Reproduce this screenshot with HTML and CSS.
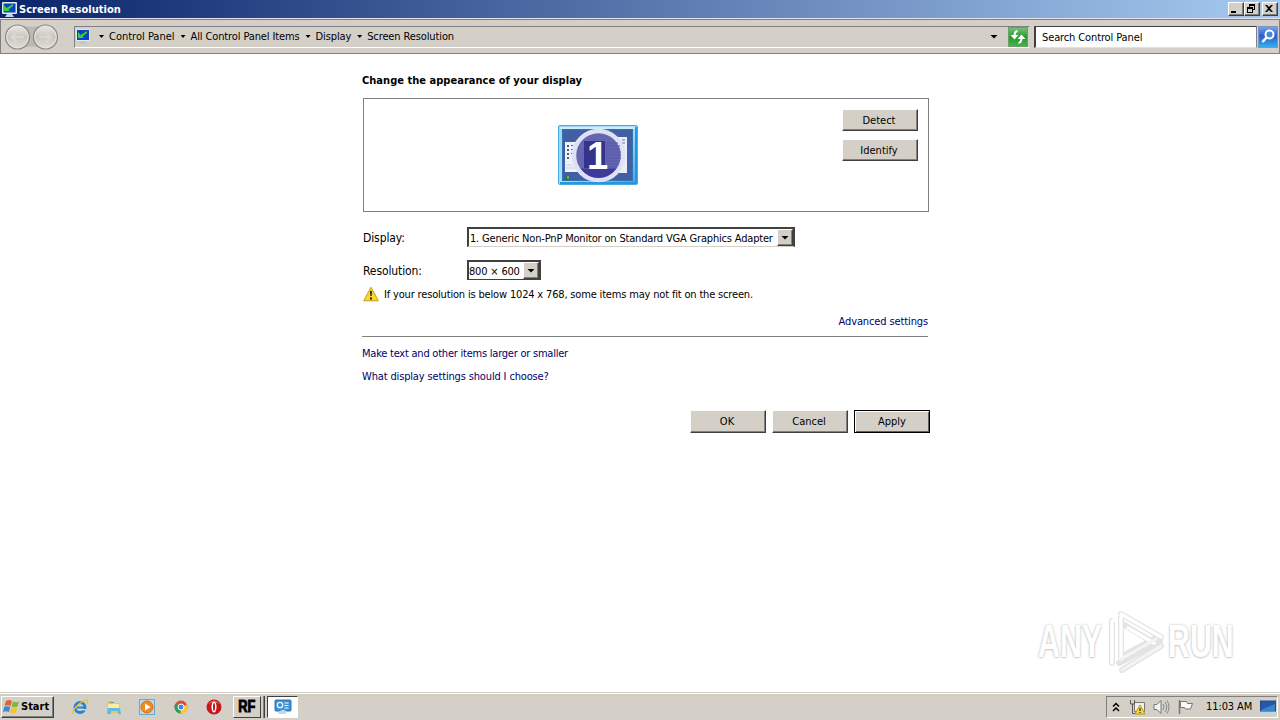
FILE: index.html
```html
<!DOCTYPE html>
<html lang="en">
<head>
    <meta charset="UTF-8">
    <meta name="viewport" content="width=device-width, initial-scale=1.0">
    <title>Screen Resolution</title>
    <link rel="stylesheet" href="styles.css">
</head>
<body>

    <!-- Title bar -->
    <header class="titlebar">
        <svg class="title-icon" viewBox="0 0 17 17">
            <rect x="1" y="1" width="15" height="12" rx="1" fill="#dfe9f2"/>
            <rect x="2.500" y="2.500" width="12" height="9" fill="#0b3fc4"/>
            <path d="M3 4v6h6L7.500 8.500L12 5V3L5.500 7z" fill="#35d43b"/>
            <path d="M6 13h5l2 3h-9z" fill="#c3d3e2"/>
        </svg>
        <h1>Screen Resolution</h1>
        <div class="window-buttons">
            <button><svg viewBox="0 0 12 10"><path d="M2 7h5v2h-5z"/></svg></button>
            <button><svg viewBox="0 0 12 10"><path d="M4 0h6v6h-2v-1h1v-3h-4v1h-1zM2 3h6v6h-6zM3 5v3h4v-3z" fill-rule="evenodd"/></svg></button>
            <button class="close"><svg viewBox="0 0 12 10"><path d="M2 1h2l2 2 2-2h2l-3 3.500 3 3.500h-2l-2-2-2 2h-2l3-3.500z"/></svg></button>
        </div>
    </header>

    <!-- Address bar -->
    <nav class="toolbar">
        <svg class="nav-buttons" viewBox="0 0 54 28">
            <defs>
                <linearGradient id="nav" x1="0" y1="0" x2="0" y2="1">
                    <stop offset="0" stop-color="#eceae7"/>
                    <stop offset=".5" stop-color="#c9c5be"/>
                    <stop offset="1" stop-color="#e2dfda"/>
                </linearGradient>
            </defs>
            <path d="M14 1.500Q27 6 41 1.500V26Q27 21 14 26z" fill="#bdb9b2"/>
            <circle cx="13.500" cy="14" r="12" fill="url(#nav)" stroke="#8d8a86" stroke-width="1.200"/>
            <circle cx="41.500" cy="14" r="12" fill="url(#nav)" stroke="#8d8a86" stroke-width="1.200"/>
            <circle cx="13.500" cy="14" r="10.700" fill="none" stroke="#e6e4e0"/>
            <circle cx="41.500" cy="14" r="10.700" fill="none" stroke="#e6e4e0"/>
            <path d="M20 14H8m5-5l-5 5 5 5M35 14h12m-5-5l5 5-5 5" fill="none" stroke="#d9d6d0" stroke-width="2.500"/>
        </svg>
        <div class="address">
            <svg class="address-icon" viewBox="0 0 16 16">
                <rect x="1" y="0" width="14" height="12" rx="1" fill="#dfe9f2"/>
                <rect x="2" y="1" width="12" height="10" fill="#0b3fc4"/>
                <path d="M3 3v6h6L7.500 7.500L12 4V2L5.500 6z" fill="#35d43b"/>
                <path d="M6 12h4l2 3h-8z" fill="#b9c6d4"/>
            </svg>
            <i class="arrow"></i><span>Control Panel</span>
            <i class="arrow"></i><span class="tight">All Control Panel Items</span>
            <i class="arrow"></i><span class="tight">Display</span>
            <i class="arrow"></i><span class="tight">Screen Resolution</span>
            <i class="arrow history"></i>
            <svg class="refresh" viewBox="0 0 20 20">
                <defs>
                    <linearGradient id="green" x1="0" y1="0" x2="0" y2="1">
                        <stop offset="0" stop-color="#7cc47a"/>
                        <stop offset=".5" stop-color="#249b2b"/>
                        <stop offset="1" stop-color="#42b843"/>
                    </linearGradient>
                </defs>
                <rect x=".5" y=".5" width="19" height="19" fill="url(#green)" stroke="#6f9d6d"/>
                <path d="M9.500 4Q6.500 4.500 6.500 9M10.500 16Q13.500 15.500 13.500 11" fill="none" stroke="#fff" stroke-width="2"/>
                <path d="M2.500 8h8l-4 4.500zM9.500 12h8l-4-4.500z" fill="#fff"/>
            </svg>
        </div>
        <div class="search">Search Control Panel</div>
        <svg class="search-button" viewBox="0 0 20 22">
            <defs>
                <linearGradient id="blue" x1="0" y1="0" x2="0" y2="1">
                    <stop offset="0" stop-color="#7ba6e6"/>
                    <stop offset=".45" stop-color="#2a5ed0"/>
                    <stop offset="1" stop-color="#35b1ee"/>
                </linearGradient>
            </defs>
            <rect x=".5" y=".5" width="19" height="21" fill="url(#blue)" stroke="#7e96c5"/>
            <circle cx="11.500" cy="8.500" r="4" fill="#4784e4" stroke="#fff" stroke-width="2"/>
            <path d="M8.500 11.500l-4 4.500" stroke="#fff" stroke-width="2.600"/>
        </svg>
    </nav>

    <!-- Display settings -->
    <main>
        <h2>Change the appearance of your display</h2>

        <section class="preview">
            <svg class="monitor" viewBox="0 0 80 60">
                <defs>
                    <linearGradient id="frame" x1="0" y1="0" x2="1" y2="1">
                        <stop offset="0" stop-color="#9bd3f1"/>
                        <stop offset=".5" stop-color="#a5dff9"/>
                        <stop offset="1" stop-color="#43a5e5"/>
                    </linearGradient>
                </defs>
                <rect x=".5" y=".5" width="79" height="59" rx="1.500" fill="url(#frame)" stroke="#4aaae2"/>
                <path d="M2 2h75v2h-75z" fill="#c8f0fc"/>
                <path d="M77 2h2v57H2v-2h75z" fill="#2596e2"/>
                <rect x="4.500" y="4.500" width="70" height="51" fill="#425fa6" stroke="#3274ae"/>
                <rect x="7" y="17" width="17" height="30" fill="#eef1f7"/>
                <path d="M9 20h2v2h-2zm0 4h2v2h-2zm0 4h2v2h-2zm0 4h2v2h-2zm4-12h2v1h-2zm0 4h2v1h-2zm0 4h2v1h-2z" fill="#555d78"/>
                <path d="M8 40h6M8 43h8" stroke="#c9cddd"/>
                <rect x="58" y="12" width="11" height="36" fill="#e9edf5"/>
                <path d="M64 15h3M64 18h3" stroke="#68749d"/>
                <path d="M7 51h5v4h-5z" fill="#286f50"/><path d="M9 51h2v3h-2z" fill="#55bc55"/>
                <circle cx="40.500" cy="30.500" r="24.500" fill="#6467b0" stroke="#dee0f5" stroke-width="4.500"/>
                <path d="M26 16h21v27h-21z" fill="#34338e"/>
                <path d="M48 18h12M48 21h14M48 24h14M48 27h15M48 30h15M48 33h15M48 36h14M48 39h13M48 42h11" stroke="#5558a6"/>
                <path d="M22.500 43.500h36Q51 53 40.500 53T22.500 43.500z" fill="#3e3c99"/>
                <text x="39.500" y="43.500" text-anchor="middle" class="monitor-number">1</text>
            </svg>
            <div class="preview-buttons">
                <button class="btn">Detect</button>
                <button class="btn">Identify</button>
            </div>
        </section>

        <div class="field">
            <label>Display:</label>
            <div class="select select-display"><span>1. Generic Non-PnP Monitor on Standard VGA Graphics Adapter</span><b></b></div>
        </div>
        <div class="field">
            <label>Resolution:</label>
            <div class="select select-resolution"><span>800 × 600</span><b></b></div>
        </div>

        <p class="warning">
            <svg viewBox="0 0 16 16">
                <path d="M8 1.200L15.300 14.800H.7z" fill="#fad92b" stroke="#c89b16" stroke-linejoin="round"/>
                <path d="M7 5h2l-.4 5h-1.200zM7 11.500h2v2h-2z" fill="#222"/>
            </svg>
            <span>If your resolution is below 1024 x 768, some items may not fit on the screen.</span>
        </p>

        <div class="advanced"><a class="tight">Advanced settings</a></div>

        <div class="links">
            <a class="larger">Make text and other items larger or smaller</a>
            <a class="choose">What display settings should I choose?</a>
        </div>

        <div class="actions">
            <button class="btn">OK</button>
            <button class="btn">Cancel</button>
            <button class="btn default">Apply</button>
        </div>
    </main>

    <!-- Watermark -->
    <div class="watermark">
        <span>ANY</span>
        <svg viewBox="0 0 60 64">
            <g fill="none" stroke-linejoin="round" stroke-linecap="round">
                <path d="M17 48V5L57 28M17 14l35 21M8 12v42M17 48l37-20M15 54l41-22M18 61l39-24" stroke="#e3e3e3" stroke-width="6"/>
                <path d="M17 50V5L57 28M24 19L50 34M8 54V12l4-2" stroke="#fff" stroke-width="3.500"/>
                <path d="M17 50l35-20M18 61l39-24" stroke="#f4f4f4" stroke-width="3"/>
            </g>
        </svg>
        <span>RUN</span>
    </div>

    <!-- Taskbar -->
    <footer class="taskbar">
        <button class="start">
            <svg viewBox="0 0 17 16">
                <path d="M3 2Q6 0 9 2L7.500 7Q4.500 5.500 1.500 7z" fill="#e8602c"/>
                <path d="M10 2.500Q13 4 16 2.500L14.500 7.500Q11.500 9 8.500 7.500z" fill="#78b943"/>
                <path d="M1.200 8Q4 6.500 7.200 8L6 13Q3 11.500 0 13z" fill="#3f85d5"/>
                <path d="M8.200 8.500Q11 10 14.200 8.500L13 13.500Q10 15 7 13.500z" fill="#f6c22e"/>
            </svg>
            Start
        </button>
        <div class="quick">
            <svg viewBox="0 0 16 16">
                <circle cx="8" cy="8.500" r="5" fill="none" stroke="#2385d4" stroke-width="3"/>
                <path d="M5 8.500h8" stroke="#2385d4" stroke-width="2"/>
                <path d="M10 10h5v1.500h-4z" fill="#d4d0c8"/>
                <path d="M1.500 15Q-.5 12 6 6T15 1Q16 2 14.500 5" fill="none" stroke="#efc036" stroke-width="1.400"/>
            </svg>
            <svg viewBox="0 0 16 16">
                <path d="M1 2h5l1 2h7v10h-13z" fill="#eac75b"/>
                <path d="M2 5h11v5h-11z" fill="#fbed9f"/>
                <path d="M2 9h12l1 6h-3v-3h-7v3h-4z" fill="#65b7e4"/>
                <path d="M4 3h4v1h-4z" fill="#65a859"/>
            </svg>
            <svg viewBox="0 0 16 16">
                <rect x=".5" y=".5" width="15" height="15" fill="#b9dbec" stroke="#6ca8cc"/>
                <circle cx="8" cy="8" r="6" fill="#f48a1c" stroke="#db6c0b"/>
                <path d="M6 4.500v7l5.500-3.500z" fill="#fff"/>
            </svg>
            <svg viewBox="0 0 16 16">
                <circle cx="8" cy="8" r="6.500" fill="#dd4b3d"/>
                <path d="M8 8L2.400 4.700A6.500 6.500 0 0 0 7.500 14.500z" fill="#26a45b"/>
                <path d="M8 8l6-2.500A6.500 6.500 0 0 1 7.500 14.500z" fill="#f6cc3b"/>
                <circle cx="8" cy="8" r="3" fill="#4486e9" stroke="#fff"/>
            </svg>
            <svg viewBox="0 0 16 16">
                <circle cx="8" cy="8" r="7.500" fill="#c5171c"/>
                <path d="M2 5Q8-2 14 5Q8 2 2 5z" fill="#e46562"/>
                <ellipse cx="8" cy="8" rx="2.500" ry="5.500" fill="#fff"/>
                <ellipse cx="8" cy="8" rx="1" ry="4" fill="#b9151b"/>
            </svg>
        </div>
        <div class="task task-rf"><span>RF</span></div>
        <div class="task-edge"></div>
        <div class="task task-active">
            <svg viewBox="0 0 18 16">
                <rect x="1" y="1" width="16" height="11" rx="1" fill="#3c91d2" stroke="#2674b6"/>
                <circle cx="6" cy="6" r="2.700" fill="none" stroke="#e9f8ff" stroke-width="1.300"/>
                <path d="M10.500 4h4M10.500 6.500h4M10.500 9h4" stroke="#fff"/>
                <path d="M4 14q5-6 9-1l-2 2h-6z" fill="#bed7e9"/>
            </svg>
        </div>
        <div class="tray">
            <svg class="chevrons" viewBox="0 0 8 10"><path d="M1 4.500l3-3 3 3M1 9l3-3 3 3" fill="none" stroke="#000" stroke-width="1.500"/></svg>
            <svg class="net" viewBox="0 0 17 16">
                <path d="M5.500 3.500h10v9h-10z" fill="#eee" stroke="#777"/>
                <path d="M1.500 1v4h4V1M3.500 5v9.500h4" fill="none" stroke="#555"/>
                <path d="M11 6l5 9h-10z" fill="#fbd931" stroke="#bd951c"/>
                <path d="M10.500 9h1v3h-1zM10.500 13h1v1h-1z"/>
            </svg>
            <svg class="sound" viewBox="0 0 17 16">
                <path d="M1 5.500h3l4-4v13l-4-4h-3z" fill="#f5f5f5" stroke="#777"/>
                <path d="M10 5q2 3 0 6M12 3q3.500 5 0 10M14 1.500q4 6.500 0 13" fill="none" stroke="#888"/>
            </svg>
            <svg class="flag" viewBox="0 0 17 16">
                <path d="M2.500 1v14" stroke="#777" stroke-width="1.500"/>
                <path d="M3.500 2.500h6l1 2h5l-2 5.500h-5l-1-1.500h-4z" fill="#fafafa" stroke="#777"/>
            </svg>
            <span>11:03 AM</span>
            <svg class="desktop" viewBox="0 0 16 14">
                <rect x=".5" y="1" width="15" height="10" fill="#2459a9" stroke="#254a86"/>
                <path d="M1 10L15 4v7h-14z" fill="#3b83cd"/>
                <path d="M1 12.500h14" stroke="#bcd5ed"/>
            </svg>
        </div>
    </footer>

</body>
</html>
```
FILE: styles.css
```css
/* General Reset */
* {
    box-sizing: border-box;
}

body {
    font-family: Tahoma, "DejaVu Sans Condensed", "DejaVu Sans", sans-serif;
    font-stretch: condensed;
    font-size: 11px;
    line-height: 14px;
    margin: 0;
    height: 720px;
    display: flex;
    flex-direction: column;
    overflow: hidden;
    background-color: #fff;
    color: #000;
    position: relative;
}

h1, h2, p {
    margin: 0;
    font-size: 11px;
}

svg {
    display: block;
    flex: none;
}

button {
    font: inherit;
    color: #000;
    padding: 0;
    border-radius: 0;
    background-color: #d4d0c8;
}

span, label, a {
    white-space: nowrap;
}

.tight {
    letter-spacing: -0.12px;
}

/* Title bar */
.titlebar {
    height: 18px;
    flex: none;
    display: flex;
    align-items: center;
    padding: 0 2px 0 1px;
    background: linear-gradient(to right, #0a246a, #a6caf0);
}

.titlebar h1 {
    color: #fff;
    flex: 1;
    margin-left: 1px;
    padding-top: 1px;
    letter-spacing: 0.04px;
    white-space: nowrap;
}

.title-icon {
    width: 17px;
    height: 17px;
}

.window-buttons {
    display: flex;
}

.window-buttons button {
    width: 16px;
    height: 14px;
    border: 1px solid;
    border-color: #fff #404040 #404040 #fff;
    box-shadow: inset -1px -1px #808080;
}

.window-buttons .close {
    margin-left: 2px;
}

.window-buttons svg {
    width: 12px;
    height: 10px;
}

/* Address bar */
.toolbar {
    height: 36px;
    flex: none;
    display: flex;
    align-items: center;
    padding: 1px 2px 0 4px;
    background-color: #d4d0c8;
    border-top: 1px solid #e4e1f0;
    border-bottom: 1px solid #808080;
    box-shadow: inset 0 1px #808080, inset 1px 0 #808080, inset -1px 0 #808080;
}

.nav-buttons {
    width: 54px;
    height: 28px;
}

.address {
    width: 956px;
    height: 22px;
    margin-left: 16px;
    display: flex;
    align-items: center;
    border: 1px solid;
    border-color: #808080 #d4d0c8 #fff #808080;
}

.address-icon {
    width: 16px;
    height: 16px;
    margin-right: 8px;
}

.arrow {
    flex: none;
    width: 5px;
    height: 3px;
    margin: 0 5px 0 6px;
    background-color: #000;
    clip-path: polygon(0 0, 100% 0, 50% 100%);
}

.address-icon + .arrow {
    margin-left: 0;
}

.address .history {
    width: 8px;
    height: 4px;
    margin: 0 10px 0 auto;
}

.refresh {
    width: 20px;
    height: 20px;
    margin-right: 1px;
}

.search {
    width: 223px;
    height: 22px;
    margin-left: 4px;
    padding: 4px 6px 0;
    letter-spacing: -0.12px;
    background-color: #fff;
    border: 1px solid #808080;
    border-top-color: #404040;
    border-left: 2px solid #404040;
    border-bottom-color: #e4e1dc;
}

.search-button {
    width: 20px;
    height: 22px;
    margin-left: 1px;
}

/* Display settings */
main {
    flex: 1;
    width: 568px;
    margin-left: 362px;
    padding-top: 20px;
}

h2 {
    white-space: nowrap;
    letter-spacing: 0.03px;
}

.preview {
    width: 566px;
    height: 114px;
    margin: 10px 0 0 1px;
    padding: 10px 10px 0 194px;
    display: flex;
    justify-content: space-between;
    border: 1px solid #808080;
}

.monitor {
    width: 80px;
    height: 60px;
    margin-top: 16px;
}

.monitor-number {
    font: bold 38px "Liberation Sans", sans-serif;
    fill: #fff;
}

.preview-buttons {
    display: flex;
    flex-direction: column;
    gap: 8px;
}

.btn {
    width: 76px;
    height: 22px;
    padding-right: 2px;
    border: 1px solid;
    border-color: #fff #404040 #404040 #fff;
    box-shadow: inset -1px -1px #808080;
}

.preview-buttons .btn {
    padding-top: 1px;
}

.field {
    height: 22px;
    margin: 14px 0 0 1px;
    display: flex;
    align-items: center;
}

.field + .field {
    margin-top: 11px;
}

.field label {
    width: 104px;
    padding-top: 2px;
    font-size: 12px;
    letter-spacing: -0.1px;
}

.select {
    display: flex;
    align-items: center;
    justify-content: space-between;
    height: 20px;
    padding-left: 1px;
    border: 2px solid;
    border-width: 2px 2px 1px;
    border-color: #404040 #404040 #d4d0c8 #404040;
}

.select span {
    padding-top: 2px;
    letter-spacing: -0.18px;
}

.select b {
    flex: none;
    width: 16px;
    height: 17px;
    display: flex;
    align-items: center;
    justify-content: center;
    background-color: #d4d0c8;
    border: 1px solid;
    border-color: #fff #404040 #404040 #fff;
    box-shadow: inset -1px -1px #808080;
}

.select b::before {
    content: "";
    width: 8px;
    height: 4px;
    background-color: #000;
    clip-path: polygon(0 0, 100% 0, 50% 100%);
}

.select-display {
    width: 328px;
}

.select-resolution {
    width: 74px;
    padding-left: 0;
    border-bottom-color: #404040;
}

.warning {
    display: flex;
    align-items: center;
    margin: 5px 0 0 1px;
    height: 16px;
    gap: 5px;
}

.warning svg {
    width: 16px;
    height: 16px;
}

.warning span {
    padding-top: 1px;
    letter-spacing: -0.17px;
}

a {
    color: #00006b;
}

.advanced {
    height: 35px;
    width: 566px;
    padding-top: 13px;
    text-align: right;
    border-bottom: 1px solid #808080;
}

.links {
    display: flex;
    flex-direction: column;
    gap: 9px;
    padding-top: 10px;
}

.larger {
    letter-spacing: -0.23px;
}

.choose {
    letter-spacing: -0.15px;
}

.actions {
    display: flex;
    justify-content: flex-end;
    gap: 6px;
    margin-top: 26px;
}

.actions .btn {
    height: 23px;
}

.actions .default {
    border-color: #000;
    box-shadow: inset 1px 1px #fff, inset -1px -1px #606060;
    padding: 1px 0 0;
}

/* Watermark floats over the page corner */
.watermark {
    position: absolute;
    left: 1038px;
    top: 609px;
    display: flex;
    align-items: center;
    color: #fff;
    font: bold 46px/64px "Liberation Sans", sans-serif;
    text-shadow: 0 0 3px #b8b8b8, 0 1px 2px #d8d8d8;
}

.watermark svg {
    width: 60px;
    height: 64px;
    margin-right: 4px;
}

.watermark span {
    width: 66px;
    transform: scaleX(.66);
    transform-origin: left;
}

/* Taskbar */
.taskbar {
    height: 28px;
    flex: none;
    display: flex;
    align-items: center;
    padding: 2px 2px 1px 1px;
    background-color: #d4d0c8;
    border-top: 1px solid #d4d0c8;
    box-shadow: inset 0 1px #fff;
}

.start {
    width: 53px;
    height: 22px;
    display: flex;
    align-items: center;
    gap: 1px;
    padding-left: 1px;
    font-weight: bold;
    border: 1px solid;
    border-color: #fff #404040 #404040 #fff;
    box-shadow: inset -1px -1px #808080;
}

.start svg {
    width: 17px;
    height: 16px;
}

.quick {
    display: flex;
    gap: 17.5px;
    margin-left: 18px;
}

.quick svg {
    width: 16px;
    height: 16px;
}

.task {
    height: 22px;
    display: flex;
    align-items: center;
    justify-content: center;
    border: 1px solid;
}

.task-rf {
    width: 28px;
    margin-left: 11px;
    font: bold 16px "Liberation Sans", sans-serif;
    -webkit-text-stroke: 1px #000;
    border-color: #fff #404040 #404040 #fff;
}

.task-rf span {
    transform: scaleX(.8);
}

.task-edge {
    width: 4px;
    height: 22px;
    border-right: 1px solid #404040;
    box-shadow: inset -1px 0 #808080;
}

.task-active {
    width: 31px;
    margin-left: 2px;
    background-color: #fff;
    border-color: #404040 #fff #fff #404040;
}

.task-active svg {
    width: 18px;
    height: 16px;
}

.tray {
    width: 172px;
    height: 22px;
    margin-left: auto;
    display: flex;
    align-items: center;
    padding-left: 5px;
    border: 1px solid;
    border-color: #808080 #fff #fff #808080;
}

.chevrons {
    width: 8px;
    height: 10px;
    margin-right: 9px;
}

.net, .sound, .flag {
    width: 17px;
    height: 16px;
    margin-right: 7px;
}

.tray span {
    width: 47px;
    margin-left: 5px;
    letter-spacing: -0.1px;
}

.desktop {
    width: 16px;
    height: 14px;
    margin-left: 7px;
}
```
